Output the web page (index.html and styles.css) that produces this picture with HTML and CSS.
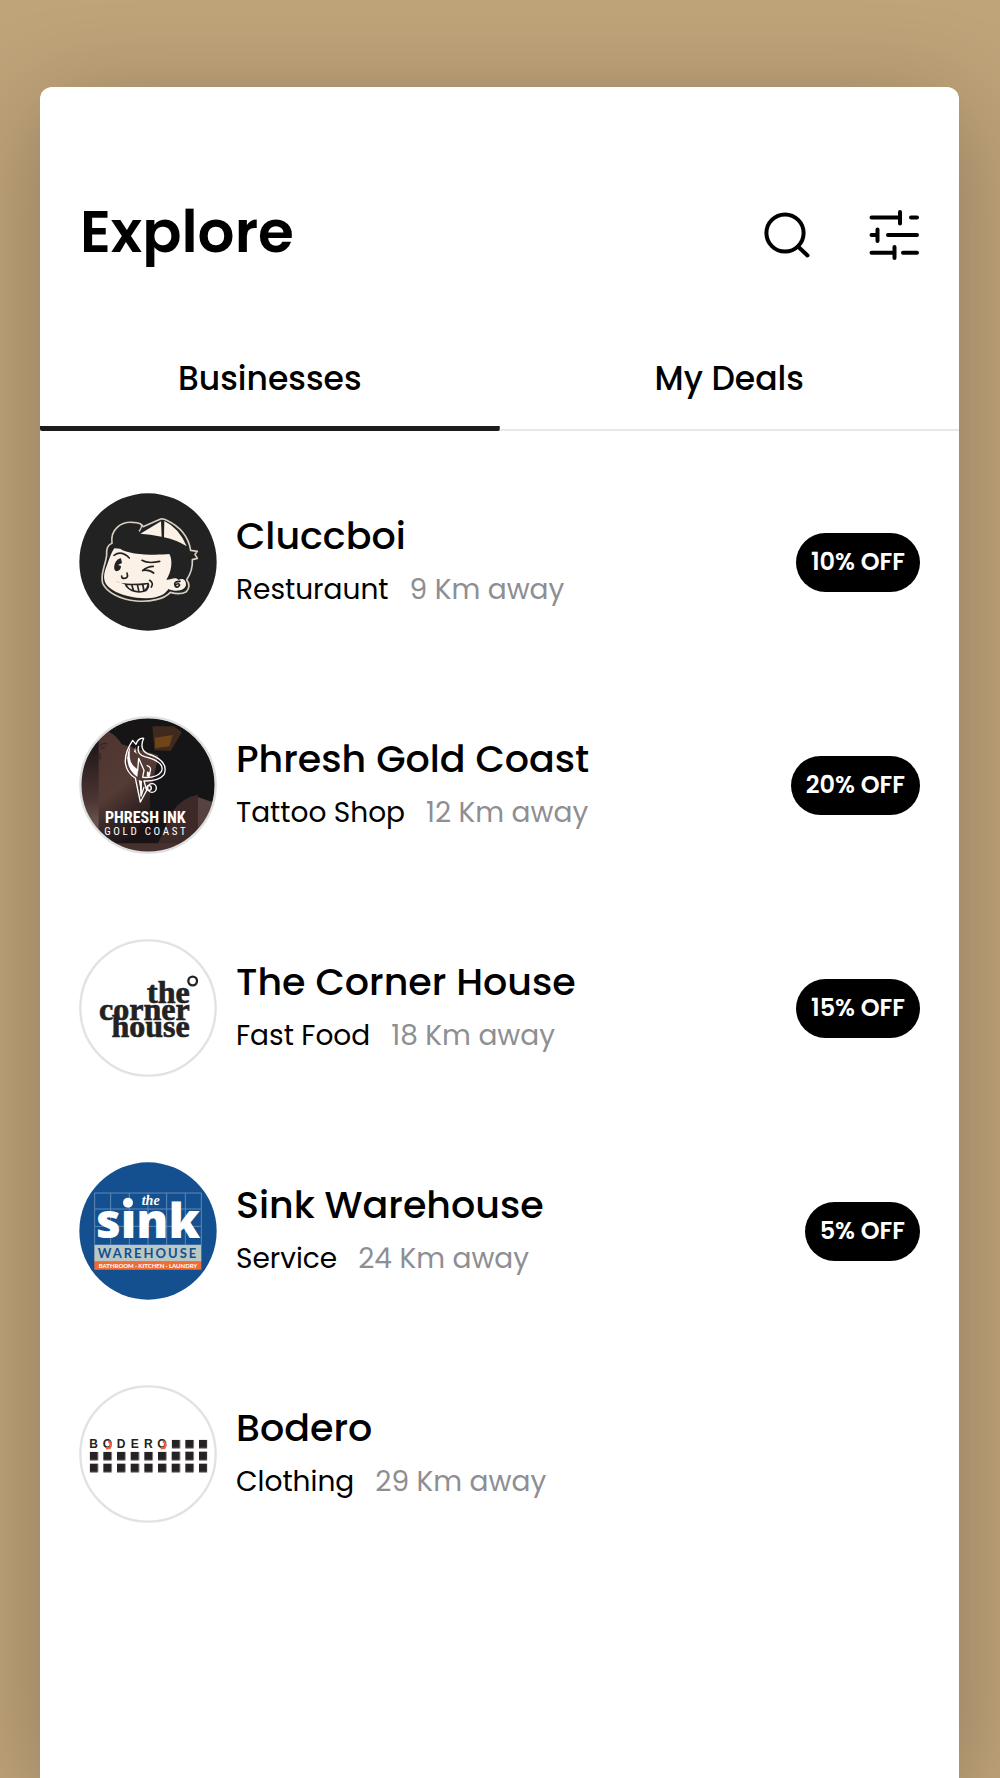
FILE: index.html
```html
<!DOCTYPE html>
<html lang="en">
<head>
<meta charset="utf-8">
<meta name="viewport" content="width=device-width, initial-scale=1">
<title>Explore</title>
<link rel="stylesheet" href="styles.css">
</head>
<body>
<main class="card">
  <header class="header">
    <h1 class="title">Explore</h1>
    <div class="actions">
      <button class="icon-button" type="button" aria-label="Search">
        <svg class="icon" viewBox="0 0 50 50" fill="none" stroke="#000" stroke-width="4" stroke-linecap="round"><circle cx="22" cy="23" r="18.6"/><path d="M35.5 37 44.5 45.5"/></svg>
      </button>
      <button class="icon-button" type="button" aria-label="Filters">
        <svg class="icon" viewBox="0 0 50 50" fill="none" stroke="#000" stroke-width="4" stroke-linecap="round" stroke-linejoin="round"><path d="M2.5 7.5H31M31 2v11.5M42 7.5H48M2.5 25H8.500M8.500 19.500V31M19 25H48M2.500 42.700H25.500M25.500 37V48M34 42.700H48"/></svg>
      </button>
    </div>
  </header>

  <nav class="tabs" aria-label="Explore sections">
    <button class="tab tab-active" type="button" aria-current="true">Businesses</button>
    <button class="tab" type="button">My Deals</button>
  </nav>

  <ul class="list">
    <li class="item">
      <svg class="avatar" viewBox="27 27 414 414" role="img" aria-label="Cluccboi logo">
        <circle cx="234" cy="234" r="206" fill="#222"/>
        <g stroke-linejoin="round" stroke-linecap="round">
          <path d="M126 178C120 135 155 112 188 115Q216 116 219 128L272 105Q280 103 290 109C330 128 355 155 362 199L382 202 375 211 382 223 367 227Q369 260 350 287Q364 306 349 323Q331 334 301 325C282 346 240 354 199 351C150 347 111 325 98 298C90 270 105 250 110 214Q108 184 126 178Z" fill="#222" stroke="#d6cfc1" stroke-width="5"/>
          <path d="M133 193C124 205 119 222 110 246C96 280 100 301 128 318C171 345 250 351 281 330Q293 320 295 315C319 326 348 319 348 301C348 285 334 282 326 288C316 276 303 288 289 287C305 263 309 229 298 210C258 214 175 213 150 194Z" fill="#fbf1e6"/>
          <path d="M211 149 273 112 275 158Q239 151 211 149ZM283 111Q327 132 350 187Q320 168 282 160Z" fill="#fbf1e6"/>
          <path d="M212 120Q219 125 208 141" fill="none" stroke="#d6cfc1" stroke-width="4"/>
          <path d="M132 214Q154 198 178 222M216 229Q234 240 269 232M218 260Q232 247 250 247M218 259Q238 256 251 267M171 267Q177 284 161 283Q154 282 155 276M239 289Q252 297 244 309M330 292Q310 292 315 305Q322 315 329 303Q326 296 318 302" fill="none" stroke="#222" stroke-width="5"/>
          <path d="M153 223C132 224 125 266 143 261Q153 258 153 246L144 243 156 237Z" fill="#222"/>
          <path d="M137 291Q160 304 236 296Q242 309 229 322Q208 330 185 322Q166 311 164 301Z" fill="#222"/>
          <path d="M171 304 183 304 187 317Q176 314 171 304ZM188 304H200L204 321 193 319ZM205 304H216L219 320 209 322ZM221 303 232 301Q232 310 224 317Z" fill="#fbf1e6"/>
        </g>
      </svg>
      <div class="info">
        <h2 class="name">Cluccboi</h2>
        <p class="meta"><span>Resturaunt</span><span class="distance">9 Km away</span></p>
      </div>
      <span class="badge">10% OFF</span>
    </li>

    <li class="item">
      <svg class="avatar" viewBox="27 27 414 414" role="img" aria-label="Phresh Ink Gold Coast logo">
        <defs>
          <clipPath id="ink-clip"><circle cx="234" cy="234" r="201"/></clipPath>
          <linearGradient id="ink-skin" x1="0" y1="0" x2="0.4" y2="1"><stop offset="0" stop-color="#4d342e"/><stop offset="0.55" stop-color="#553b35"/><stop offset="1" stop-color="#191316"/></linearGradient>
          <linearGradient id="ink-side" x1="0" y1="0" x2="0" y2="1"><stop offset="0" stop-color="#171113"/><stop offset="0.55" stop-color="#4c3533"/><stop offset="0.75" stop-color="#685552"/><stop offset="1" stop-color="#171214"/></linearGradient>
        </defs>
        <g clip-path="url(#ink-clip)">
          <path d="M27 27H441V441H27Z" fill="#151518"/>
          <path d="M27 80H90V441H27Z" fill="url(#ink-side)"/>
          <path d="M86 66Q130 70 155 112L265 145 250 220Q222 300 270 411H86Z" fill="url(#ink-skin)"/>
          <path d="M246 58H310L336 75 302 132 253 130Z" fill="#3f2a1d"/>
          <path d="M254 92 308 84 298 118 256 124Z" fill="#704319"/>
          <path d="M168 58H247L252 132Q200 136 153 101Z" fill="#171416"/>
          <path d="M383 263V441H250L306 314Q337 271 383 263Z" fill="#3c2928"/>
          <path d="M383 270 441 290V380H383Z" fill="#58423f"/>
          <path d="M27 409H441V441H27Z" fill="#45322e"/>
          <path d="M89 119Q98 105 112 111M92 126 105 119M90 138 90 158" fill="none" stroke="#302729" stroke-width="4"/>
          <g fill="none" stroke="#fff" stroke-width="4" stroke-linejoin="round">
            <path d="M221 94Q204 92 198 112L188 100Q164 135 166 168Q171 199 196 213L211 285 230 250 222 222Q267 223 282 203C297 167 259 148 234 141Q206 128 221 94Z"/>
            <path d="M206 117Q199 141 224 149C255 157 285 170 274 194Q260 214 218 211L222 190 206 154 203 190Q181 176 173 151M211 223 213 268 222 240M239 198Q247 180 230 175"/>
            <circle cx="246" cy="243" r="13"/><circle cx="237" cy="243" r="7"/>
          </g>
          <path d="M181 116C176 153 180 175 204 191L202 210Q165 184 174 136ZM231 193 242 199 238 211 230 208ZM206 219 216 222 215 265ZM199 109Q191 130 203 141L192 134Z" fill="#fff"/>
          <text class="logo-ink" x="226" y="347">PHRESH INK</text>
          <text class="logo-coast" x="229" y="383">GOLD COAST</text>
        </g>
        <circle cx="234" cy="234" r="203" fill="none" stroke="#e0dfe0" stroke-width="7"/>
      </svg>
      <div class="info">
        <h2 class="name">Phresh Gold Coast</h2>
        <p class="meta"><span>Tattoo Shop</span><span class="distance">12 Km away</span></p>
      </div>
      <span class="badge">20% OFF</span>
    </li>

    <li class="item">
      <svg class="avatar" viewBox="27 27 414 414" role="img" aria-label="The Corner House logo">
        <circle cx="234" cy="234" r="203" fill="#fff" stroke="#e2e2e3" stroke-width="7"/>
        <g class="logo-corner">
          <text x="359" y="220">the</text>
          <text x="359" y="269">corner</text>
          <text x="359" y="320">house</text>
        </g>
        <circle cx="368" cy="153" r="13" fill="none" stroke="#222" stroke-width="7"/>
      </svg>
      <div class="info">
        <h2 class="name">The Corner House</h2>
        <p class="meta"><span>Fast Food</span><span class="distance">18 Km away</span></p>
      </div>
      <span class="badge">15% OFF</span>
    </li>

    <li class="item">
      <svg class="avatar" viewBox="27 27 414 414" role="img" aria-label="The Sink Warehouse logo">
        <circle cx="234" cy="234" r="206" fill="#144f90"/>
        <path d="M74 120H394V276H74ZM122 120V276M178 120V276M234 120V276M290 120V276M346 120V276M74 168H394M74 220H394" fill="none" stroke="#6089b5" stroke-width="3"/>
        <text class="logo-the" x="242" y="155">the</text>
        <text class="logo-sink" x="234" y="256">sınk</text>
        <circle cx="174" cy="149" r="15" fill="#fff"/>
        <path d="M73 276H394V326H73Z" fill="#bac8c3"/>
        <path d="M73 325H394V350H73Z" fill="#f16b35"/>
        <text class="logo-warehouse" x="234" y="315">WAREHOUSE</text>
        <text class="logo-rooms" x="234" y="344">BATHROOM · KITCHEN · LAUNDRY</text>
      </svg>
      <div class="info">
        <h2 class="name">Sink Warehouse</h2>
        <p class="meta"><span>Service</span><span class="distance">24 Km away</span></p>
      </div>
      <span class="badge">5% OFF</span>
    </li>

    <li class="item">
      <svg class="avatar" viewBox="27 27 414 414" role="img" aria-label="Bodero logo">
        <defs>
          <pattern id="tiles" x="59" y="191" width="41" height="36" patternUnits="userSpaceOnUse"><path d="M0 0H25V26H0Z" fill="#262223"/></pattern>
        </defs>
        <circle cx="234" cy="234" r="203" fill="#fff" stroke="#e2e2e3" stroke-width="7"/>
        <path d="M305 191H412V227H305ZM59 227H412V292H59Z" fill="url(#tiles)"/>
        <text class="logo-bodero" x="71 112 153 194 235 276" y="216">BODERO</text>
        <path d="M115 195Q128 204 119 216L108 217M279 195Q292 204 283 216L272 217" fill="none" stroke="#fa5b36" stroke-width="7"/>
      </svg>
      <div class="info">
        <h2 class="name">Bodero</h2>
        <p class="meta"><span>Clothing</span><span class="distance">29 Km away</span></p>
      </div>
    </li>
  </ul>
</main>
</body>
</html>
```
FILE: styles.css
```css
* {
  box-sizing: border-box;
}

body {
  margin: 0;
  padding: 87px 41px 0 40px;
  min-height: 100vh;
  display: flex;
  overflow-x: hidden;
  background: #bfa379;
  color: #000;
  font-family: Poppins, Inter, "Open Sans", sans-serif;
}

h1, h2, p, ul {
  margin: 0;
  padding: 0;
}

button {
  padding: 0;
  border: 0;
  background: none;
  color: inherit;
  font: inherit;
  cursor: pointer;
}

.card {
  flex: 1;
  min-width: 0;
  background: #fff;
  border-radius: 12px 12px 0 0;
  box-shadow: 0 20px 100px rgba(0, 0, 0, 0.25);
}

.header {
  display: flex;
  align-items: flex-start;
  justify-content: space-between;
  padding: 105px 40px 0 40px;
}

.title {
  font-size: 58px;
  font-weight: 600;
  line-height: 80px;
}

.actions {
  display: flex;
  gap: 56px;
  padding-top: 18px;
}

.icon-button {
  display: flex;
}

.icon {
  width: 50px;
  height: 50px;
}

.tabs {
  display: grid;
  grid-template-columns: 1fr 1fr;
  margin-top: 57px;
  box-shadow: inset 0 -2px #e8e8e8;
}

.tab {
  height: 102px;
  padding-top: 2px;
  border-bottom: 5px solid transparent;
  font-size: 33px;
  font-weight: 500;
}

.tab-active {
  background: linear-gradient(#1c1c1c, #1c1c1c) bottom / 100% 5px no-repeat border-box;
  border-radius: 2px;
}

.list {
  display: grid;
  gap: 85px;
  padding: 62px 39px 85px;
  list-style: none;
}

.item {
  display: flex;
  align-items: center;
  gap: 19px;
}

.avatar {
  flex: none;
  width: 138px;
  height: 138px;
}

.info {
  flex: 1;
  min-width: 0;
  padding-bottom: 2px;
}

.name {
  font-size: 38px;
  font-weight: 500;
  line-height: 58px;
}

.meta {
  display: flex;
  gap: 21px;
  font-size: 28px;
  line-height: 50px;
}

.distance {
  color: #8e8e93;
}

.badge {
  padding: 0 15px 2px;
  border-radius: 30px;
  background: #000;
  color: #fff;
  font-size: 24px;
  font-weight: 600;
  line-height: 57px;
  white-space: nowrap;
}

.avatar text {
  text-anchor: middle;
}

.logo-ink {
  fill: #fff;
  font: bold 48px "Liberation Sans Narrow", "Roboto Condensed", "Open Sans Condensed", Roboto, sans-serif;
}

.logo-coast {
  fill: #fff;
  font: 33px "Liberation Sans Narrow", "Roboto Condensed", Roboto, sans-serif;
  letter-spacing: 8px;
}

.avatar .logo-corner text {
  fill: #222;
  stroke: #222;
  stroke-width: 2px;
  font: bold 96px "Liberation Serif", serif;
  text-anchor: end;
}

.logo-the {
  fill: #fff;
  font: italic bold 42px "Liberation Serif", serif;
}

.logo-sink {
  fill: #fff;
  font: 800 144px "Open Sans", sans-serif;
}

.logo-warehouse {
  fill: #144f90;
  font: bold 39px Lato, sans-serif;
  letter-spacing: 6px;
}

.logo-rooms {
  fill: #fff;
  font: bold 18px Lato, sans-serif;
}

.logo-bodero {
  fill: #222;
  font: bold 36px "Liberation Sans", sans-serif;
}
```
